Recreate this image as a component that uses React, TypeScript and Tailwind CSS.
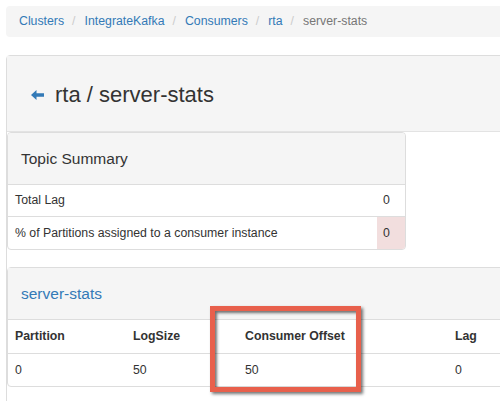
import React from "react";

function ArrowLeft() {
  return (
    <svg width="13" height="10" viewBox="0 0 13 10" className="shrink-0">
      <polygon points="0,5 5.5,0 5.5,3.2 13,3.2 13,6.8 5.5,6.8 5.5,10" fill="#337ab7" />
    </svg>
  );
}

export default function App() {
  const crumbs = ["Clusters", "IntegrateKafka", "Consumers", "rta"];
  return (
    <div
      className="relative w-[500px] h-[401px] overflow-hidden bg-white text-[#333] text-[12.3px]"
      style={{ fontFamily: '"Liberation Sans", Arial, Helvetica, sans-serif' }}
    >
      {/* Breadcrumb */}
      <div className="mt-[6px] ml-[6px] h-[31px] w-[520px] bg-[#f5f5f5] rounded-[4px] pl-[13px] flex items-center">
        {crumbs.map((c) => (
          <React.Fragment key={c}>
            <span className="text-[#337ab7]">{c}</span>
            <span className="ml-[8px] mr-[9px] text-[#ccc]">/</span>
          </React.Fragment>
        ))}
        <span className="text-[#777]">server-stats</span>
      </div>

      {/* Outer panel */}
      <div className="mt-[18px] ml-[6px] w-[520px] h-[400px] border border-[#ddd] rounded-tl-[4px]">
        <div className="h-[76px] bg-[#f5f5f5] border-b border-[#e3e3e3] flex items-center pl-[24px] pt-[3px]">
          <ArrowLeft />
          <h3 className="ml-[11px] text-[22px] leading-none font-normal text-[#333]">rta / server-stats</h3>
        </div>

        {/* Topic Summary panel */}
        <div className="w-[399px] border border-[#ddd] rounded-[4px] overflow-hidden bg-white">
          <div className="h-[52px] bg-[#f5f5f5] border-b border-[#ddd] flex items-center pl-[13px]">
            <span className="text-[15.5px]">Topic Summary</span>
          </div>
          <div className="flex h-[32px] border-b border-[#ddd]">
            <div className="flex-1 flex items-center pl-[7px]">Total Lag</div>
            <div className="w-[28px] flex items-center pl-[6px]">0</div>
          </div>
          <div className="flex h-[32px]">
            <div className="flex-1 flex items-center pl-[7px]">% of Partitions assigned to a consumer instance</div>
            <div className="w-[28px] flex items-center pl-[6px] bg-[#f2dede]">0</div>
          </div>
        </div>

        {/* server-stats panel */}
        <div className="mt-[17px] w-[513px] border border-[#ddd] rounded-l-[4px] bg-white">
          <div className="h-[52px] bg-[#f5f5f5] border-b border-[#ddd] flex items-center pl-[13px]">
            <span className="text-[15.5px] text-[#337ab7]">server-stats</span>
          </div>
          <div className="grid grid-cols-[118px_112px_210px_1fr] h-[34px] border-b border-[#ddd] font-bold items-center">
            <div className="pl-[7px]">Partition</div>
            <div className="pl-[7px]">LogSize</div>
            <div className="pl-[7px]">Consumer Offset</div>
            <div className="pl-[7px]">Lag</div>
          </div>
          <div className="grid grid-cols-[118px_112px_210px_1fr] h-[32px] items-center">
            <div className="pl-[7px]">0</div>
            <div className="pl-[7px]">50</div>
            <div className="pl-[7px]">50</div>
            <div className="pl-[7px]">0</div>
          </div>
        </div>
      </div>

      {/* Annotation box */}
      <div
        className="absolute left-[210px] top-[306px] w-[151px] h-[86px] border-[5px] border-[#e8604c]"
        style={{ boxShadow: "2px 2px 3px rgba(0,0,0,0.55), inset 2px 2px 3px rgba(0,0,0,0.55)" }}
      />
    </div>
  );
}
